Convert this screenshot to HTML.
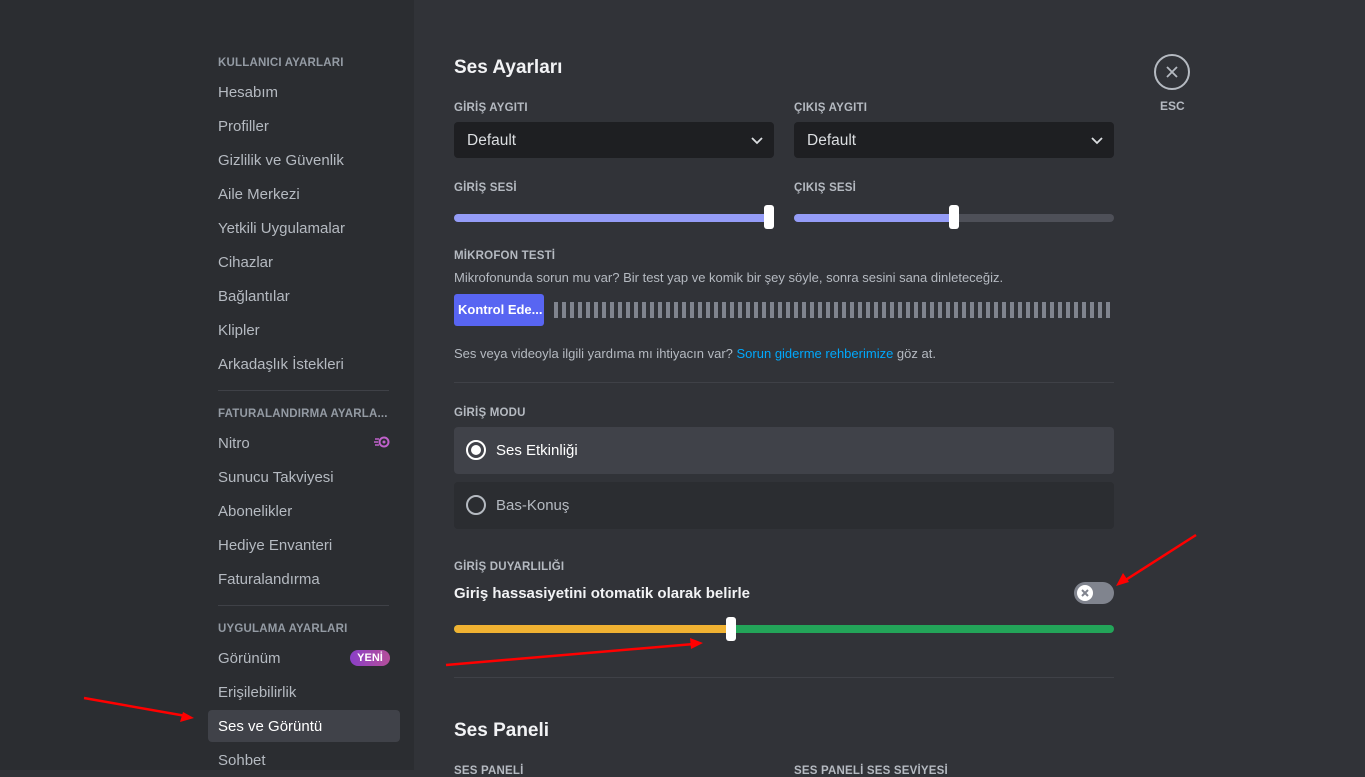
<!DOCTYPE html>
<html><head><meta charset="utf-8"><style>
*{box-sizing:border-box;margin:0;padding:0}
body{width:1365px;height:770px;overflow:hidden;background:#313338;font-family:"Liberation Sans",sans-serif;position:relative;color:#dbdee1}
.side{position:absolute;left:0;top:0;width:414px;height:770px;background:#2b2d31}
.h{position:absolute;left:218px;font-size:11.5px;font-weight:bold;color:#949ba4;letter-spacing:.2px;margin-top:2px}
.it{position:absolute;left:218px;font-size:15px;color:#b5bac1;margin-top:1px}
.sep{position:absolute;left:218px;width:171px;height:1px;background:#3f4147}
.sel{position:absolute;left:208px;top:710px;width:192px;height:32px;background:#404249;border-radius:4px}
.lab{position:absolute;font-size:11.5px;font-weight:bold;color:#b5bac1;letter-spacing:.2px;margin-top:2px}
.sel2{position:absolute;width:320px;height:36px;background:#1e1f22;border-radius:4px;top:122px;font-size:15.5px;color:#dbdee1;padding:10px 13px}
.sel2 svg{position:absolute;right:10px;top:11px}
.track{position:absolute;height:8px;border-radius:4px}
.knob{position:absolute;width:10px;height:24px;background:#fff;border-radius:3px}
.t{position:absolute;font-size:13px;color:#b5bac1;margin-top:1px}
.hr{position:absolute;left:454px;width:660px;height:1px;background:#3f4147}
.radio{position:absolute;left:454px;width:660px;height:47px;border-radius:4px;font-size:15px;padding:15px 0 0 42px}
.rc{position:absolute;left:12px;top:13px;width:20px;height:20px;border-radius:50%;border:2px solid #dbdee1}
</style></head><body>
<div class="side"></div>
<div class="h" style="top:55px">KULLANICI AYARLARI</div>
<div class="it" style="top:83px">Hesabım</div>
<div class="it" style="top:117px">Profiller</div>
<div class="it" style="top:151px">Gizlilik ve Güvenlik</div>
<div class="it" style="top:185px">Aile Merkezi</div>
<div class="it" style="top:219px">Yetkili Uygulamalar</div>
<div class="it" style="top:253px">Cihazlar</div>
<div class="it" style="top:287px">Bağlantılar</div>
<div class="it" style="top:321px">Klipler</div>
<div class="it" style="top:355px">Arkadaşlık İstekleri</div>
<div class="sep" style="top:390px"></div>
<div class="h" style="top:406px">FATURALANDIRMA AYARLA...</div>
<div class="it" style="top:434px">Nitro</div>
<svg style="position:absolute;left:374px;top:436px" width="16" height="12" viewBox="0 0 16 12"><circle cx="10" cy="6" r="4.5" fill="none" stroke="#c061cb" stroke-width="2"/><circle cx="10" cy="6" r="1.5" fill="#c061cb"/><path d="M1 3h4M0 6h4M1 9h4" stroke="#c061cb" stroke-width="1.5"/></svg>
<div class="it" style="top:468px">Sunucu Takviyesi</div>
<div class="it" style="top:502px">Abonelikler</div>
<div class="it" style="top:536px">Hediye Envanteri</div>
<div class="it" style="top:570px">Faturalandırma</div>
<div class="sep" style="top:605px"></div>
<div class="h" style="top:621px">UYGULAMA AYARLARI</div>
<div class="it" style="top:649px">Görünüm</div>
<div style="position:absolute;left:350px;top:650px;width:40px;height:16px;border-radius:8px;background:linear-gradient(90deg,#8a3fc7,#b54f9a);color:#fff;font-size:11px;font-weight:bold;text-align:center;line-height:16px">YENİ</div>
<div class="it" style="top:683px">Erişilebilirlik</div>
<div class="sel"></div>
<div class="it" style="top:717px;color:#fff">Ses ve Görüntü</div>
<div class="it" style="top:751px">Sohbet</div>

<div style="position:absolute;left:454px;top:57px;font-size:19px;font-weight:bold;color:#f2f3f5">Ses Ayarları</div>
<div class="lab" style="left:454px;top:100px">GİRİŞ AYGITI</div>
<div class="lab" style="left:794px;top:100px">ÇIKIŞ AYGITI</div>
<div class="sel2" style="left:454px">Default<svg width="14" height="14" viewBox="0 0 14 14"><path d="M2 5l5 5 5-5" stroke="#dbdee1" stroke-width="1.8" fill="none"/></svg></div>
<div class="sel2" style="left:794px">Default<svg width="14" height="14" viewBox="0 0 14 14"><path d="M2 5l5 5 5-5" stroke="#dbdee1" stroke-width="1.8" fill="none"/></svg></div>
<div class="lab" style="left:454px;top:180px">GİRİŞ SESİ</div>
<div class="lab" style="left:794px;top:180px">ÇIKIŞ SESİ</div>
<div class="track" style="left:454px;top:214px;width:316px;background:#949cf7"></div>
<div class="knob" style="left:764px;top:205px"></div>
<div class="track" style="left:794px;top:214px;width:320px;background:#4e5058"></div>
<div class="track" style="left:794px;top:214px;width:160px;background:#949cf7"></div>
<div class="knob" style="left:949px;top:205px"></div>
<div class="lab" style="left:454px;top:248px">MİKROFON TESTİ</div>
<div class="t" style="left:454px;top:269px">Mikrofonunda sorun mu var? Bir test yap ve komik bir şey söyle, sonra sesini sana dinleteceğiz.</div>
<div style="position:absolute;left:454px;top:294px;width:90px;height:32px;background:#5865f2;border-radius:3px;color:#fff;font-size:13px;font-weight:bold;line-height:32px;padding-left:4px;white-space:nowrap;overflow:hidden">Kontrol Ede...</div>
<div style="position:absolute;left:554px;top:302px;width:558px;height:16px;background:repeating-linear-gradient(90deg,#80848e 0 4px,transparent 4px 8px)"></div>
<div class="t" style="left:454px;top:345px">Ses veya videoyla ilgili yardıma mı ihtiyacın var? <span style="color:#00a8fc">Sorun giderme rehberimize</span> göz at.</div>
<div class="hr" style="top:382px"></div>
<div class="lab" style="left:454px;top:405px">GİRİŞ MODU</div>
<div class="radio" style="top:427px;background:#404249;color:#fff"><div class="rc" style="border-color:#fff"><div style="position:absolute;left:3px;top:3px;width:10px;height:10px;border-radius:50%;background:#fff"></div></div>Ses Etkinliği</div>
<div class="radio" style="top:482px;background:#2b2d31;color:#b5bac1"><div class="rc" style="border-color:#b5bac1"></div>Bas-Konuş</div>
<div class="lab" style="left:454px;top:559px">GİRİŞ DUYARLILIĞI</div>
<div style="position:absolute;left:454px;top:585px;font-size:15px;font-weight:bold;color:#f2f3f5">Giriş hassasiyetini otomatik olarak belirle</div>
<div style="position:absolute;left:1074px;top:582px;width:40px;height:22px;border-radius:11px;background:#80848e"><div style="position:absolute;left:3px;top:3px;width:16px;height:16px;border-radius:50%;background:#fff"><svg width="16" height="16" viewBox="0 0 16 16"><path d="M5 5l6 6M11 5l-6 6" stroke="#80848e" stroke-width="2"/></svg></div></div>
<div class="track" style="left:454px;top:625px;width:660px;background:#23a559"></div>
<div class="track" style="left:454px;top:625px;width:278px;background:#f0b232"></div>
<div class="knob" style="left:726px;top:617px"></div>
<div class="hr" style="top:677px"></div>
<div style="position:absolute;left:454px;top:720px;font-size:19px;font-weight:bold;color:#f2f3f5">Ses Paneli</div>
<div class="lab" style="left:454px;top:763px">SES PANELİ</div>
<div class="lab" style="left:794px;top:763px">SES PANELİ SES SEVİYESİ</div>

<div style="position:absolute;left:1154px;top:54px;width:36px;height:36px;border-radius:50%;border:2px solid #b5bac1"><svg style="position:absolute;left:9px;top:9px" width="14" height="14" viewBox="0 0 14 14"><path d="M2 2l10 10M12 2L2 12" stroke="#b5bac1" stroke-width="1.8"/></svg></div>
<div style="position:absolute;left:1160px;top:99px;font-size:12px;font-weight:bold;color:#b5bac1">ESC</div>

<svg style="position:absolute;left:0;top:0" width="1365" height="770">
<g stroke="#f00" stroke-width="2.5" fill="#f00">
<line x1="84" y1="698" x2="186" y2="716"/><path d="M194 718l-14 4 3-10z" stroke="none"/>
<line x1="446" y1="665" x2="694" y2="644"/><path d="M703 643l-12 6-1-11z" stroke="none"/>
<line x1="1196" y1="535" x2="1124" y2="581"/><path d="M1116 586l7-13 6 9z" stroke="none"/>
</g></svg>
</body></html>
